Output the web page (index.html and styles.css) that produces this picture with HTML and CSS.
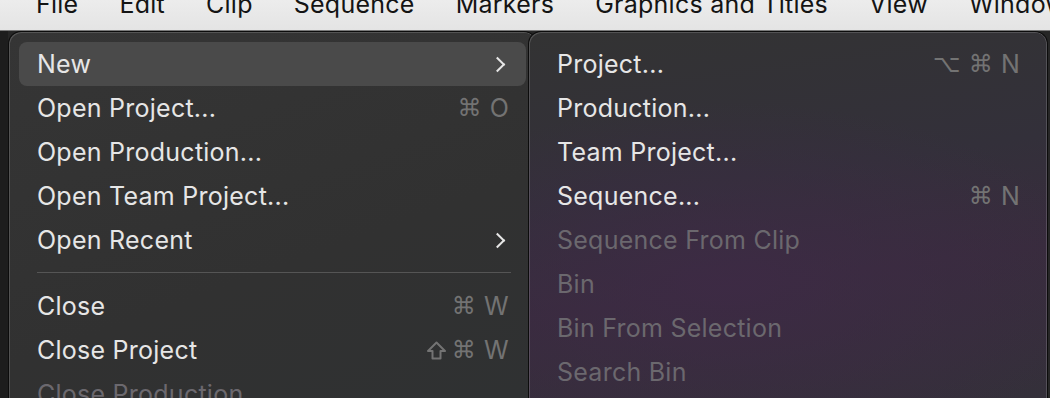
FILE: index.html
```html
<!doctype html>
<html lang="en">
    <head>
        <meta charset="UTF-8" />
        <meta name="viewport" content="width=device-width, initial-scale=1.0" />
        <title>File menu</title>
        <link rel="stylesheet" href="styles.css">
    </head>
    <body>
        <div class="menubar">
            <span class="bar-item active">File</span>
            <span class="bar-item">Edit</span>
            <span class="bar-item">Clip</span>
            <span class="bar-item">Sequence</span>
            <span class="bar-item">Markers</span>
            <span class="bar-item">Graphics and Titles</span>
            <span class="bar-item">View</span>
            <span class="bar-item">Window</span>
        </div>

        <div class="workspace">
            <div class="menu main-menu">
                <div class="row selected">
                    <span class="label">New</span>
                    <span class="chevron"></span>
                </div>
                <div class="row">
                    <span class="label">Open Project...</span>
                    <span class="keys"><span class="mod">⌘</span><span>O</span></span>
                </div>
                <div class="row">
                    <span class="label">Open Production...</span>
                </div>
                <div class="row">
                    <span class="label">Open Team Project...</span>
                </div>
                <div class="row">
                    <span class="label">Open Recent</span>
                    <span class="chevron"></span>
                </div>
                <div class="separator"></div>
                <div class="row">
                    <span class="label">Close</span>
                    <span class="keys"><span class="mod">⌘</span><span>W</span></span>
                </div>
                <div class="row">
                    <span class="label">Close Project</span>
                    <span class="keys">
                        <svg class="shift" width="21" height="19" viewBox="0 0 21 19">
                            <path d="M10.5 1.5 L19 10 H14.5 V17.5 H6.5 V10 H2 Z" fill="none" stroke="#737373" stroke-width="2" stroke-linejoin="round" />
                        </svg>
                        <span class="mod">⌘</span><span>W</span>
                    </span>
                </div>
                <div class="row disabled">
                    <span class="label">Close Production</span>
                </div>
            </div>

            <div class="menu sub-menu">
                <div class="row">
                    <span class="label">Project...</span>
                    <span class="keys"><span class="mod">⌥</span><span class="mod">⌘</span><span>N</span></span>
                </div>
                <div class="row">
                    <span class="label">Production...</span>
                </div>
                <div class="row">
                    <span class="label">Team Project...</span>
                </div>
                <div class="row">
                    <span class="label">Sequence...</span>
                    <span class="keys"><span class="mod">⌘</span><span>N</span></span>
                </div>
                <div class="row disabled">
                    <span class="label">Sequence From Clip</span>
                </div>
                <div class="row disabled">
                    <span class="label">Bin</span>
                </div>
                <div class="row disabled">
                    <span class="label">Bin From Selection</span>
                </div>
                <div class="row disabled">
                    <span class="label">Search Bin</span>
                </div>
            </div>
        </div>
    </body>
</html>
```

FILE: styles.css
```css
html,
body {
    margin: 0;
    height: 100%;
    overflow: hidden;
    background-color: #1c1c1c;
    font-family: "Inter", "Noto Sans", sans-serif;
}

.menubar {
    height: 31px;
    display: flex;
    align-items: flex-end;
    gap: 41px;
    background: linear-gradient(#ececec, #e4e4e4);
    border-bottom: 1px solid #7a7a7a;
    box-sizing: border-box;
    overflow: hidden;
    padding-left: 36px;
    white-space: nowrap;
}

.bar-item {
    flex-shrink: 0;
    font-size: 25px;
    line-height: 25px;
    letter-spacing: 0.25px;
    color: #141414;
    margin-bottom: 13px;
    position: relative;
}

.bar-item.active::before {
    content: "";
    position: absolute;
    left: -30px;
    right: -31px;
    top: -20px;
    bottom: -11px;
    background-color: rgba(0, 0, 0, 0.09);
    border-radius: 8px;
    z-index: -1;
}

.workspace {
    display: flex;
    padding-left: 8px;
    height: calc(100% - 31px);
    background: linear-gradient(90deg, #1d1d1d 8px, #262626 8px);
}

.menu {
    box-sizing: border-box;
    height: 100%;
    overflow: hidden;
    border: 1px solid #0c0c0c;
    border-bottom: none;
    border-radius: 13px 13px 0 0;
    box-shadow: inset 1px 1px 0 rgba(255, 255, 255, 0.16), inset -1px 0 0 rgba(255, 255, 255, 0.16);
    padding: 10px;
}

.main-menu {
    width: 529px;
    background: linear-gradient(160deg, #353535 0%, #313131 60%, #2f3132 100%);
}

.sub-menu {
    width: 520px;
    margin-left: -9px;
    position: relative;
    background:
        radial-gradient(ellipse 380px 180px at 200px 250px, rgba(62, 42, 70, 0.8), rgba(62, 42, 70, 0) 100%),
        linear-gradient(172deg, #333333 0%, #33303a 40%, #382c3d 65%, #34303a 100%);
}

.row {
    height: 44px;
    display: flex;
    align-items: center;
    justify-content: space-between;
    padding: 0 17px 0 18px;
    border-radius: 8px;
    font-size: 25px;
    letter-spacing: 0.25px;
    color: #e6e6e6;
    white-space: nowrap;
}

.row.selected {
    background-color: #4a4a4a;
}

.row.disabled {
    color: #6b686e;
}

.keys {
    display: flex;
    align-items: center;
    gap: 8px;
    color: #737373;
    font-size: 25px;
}

.keys .mod {
    font-family: "DejaVu Sans", sans-serif;
    font-size: 24px;
}

.shift {
    margin-right: -3px;
}

.chevron {
    width: 9px;
    height: 9px;
    border-top: 2.5px solid #e6e6e6;
    border-right: 2.5px solid #e6e6e6;
    transform: rotate(45deg);
    margin-right: 6px;
}

.separator {
    height: 1px;
    margin: 10px 15px 11px 18px;
    background-color: #555;
}
```
